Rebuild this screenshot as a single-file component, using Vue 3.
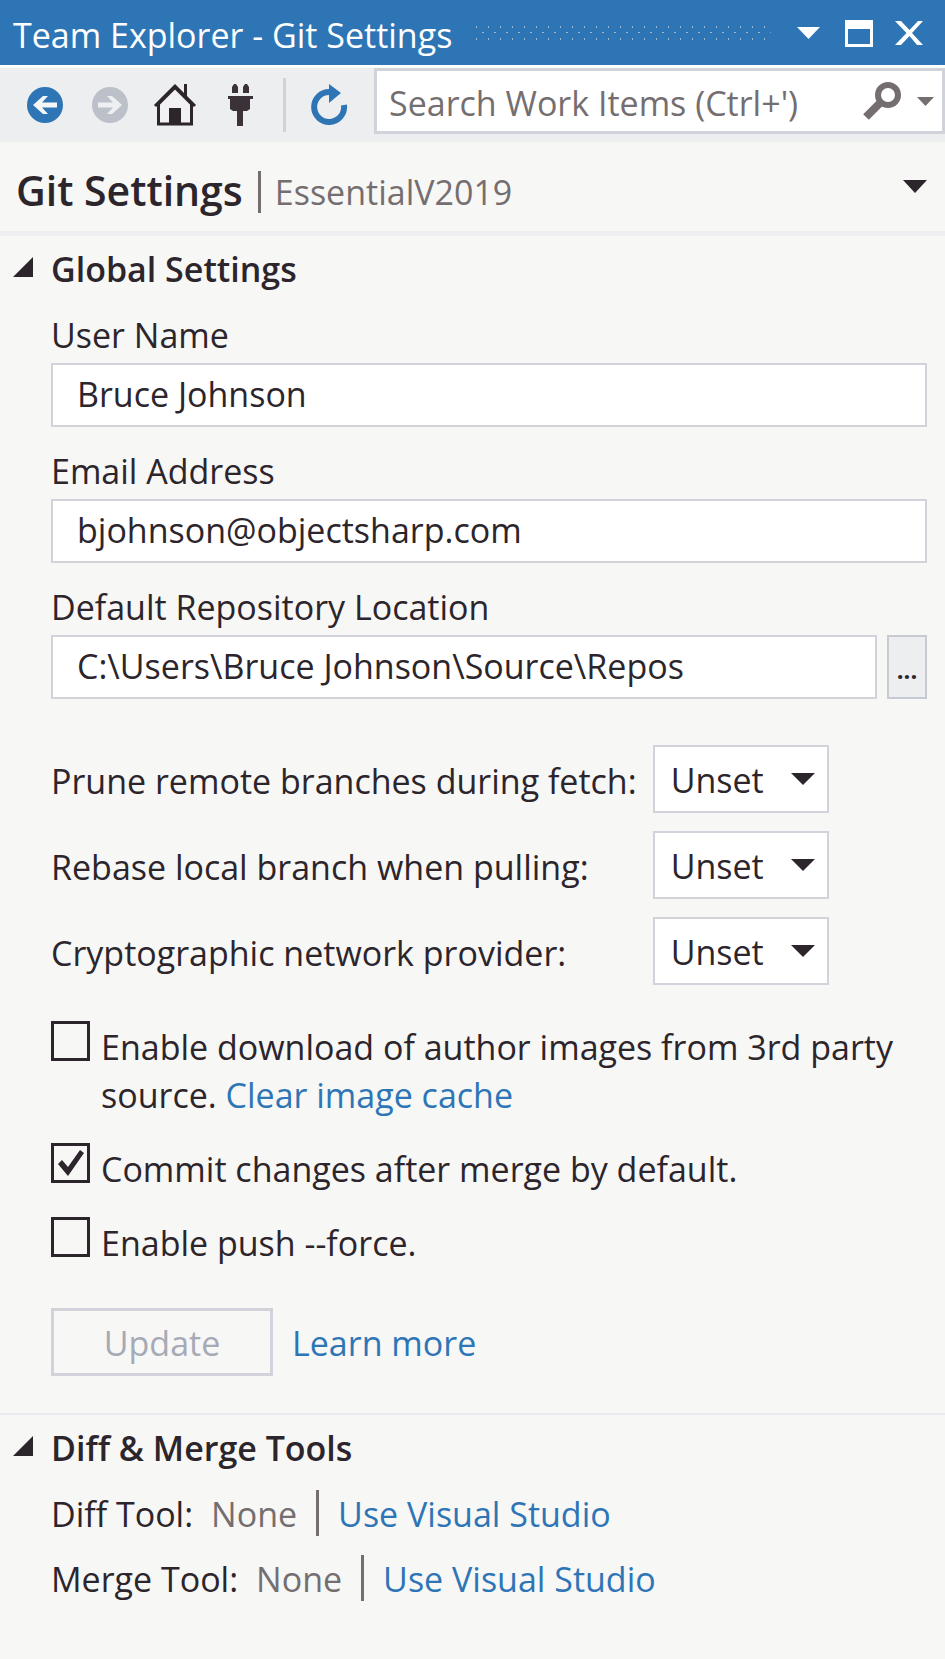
<script setup>
import { reactive, ref } from 'vue'

const search = ref('')

const fields = reactive([
  { id: 'user-name', label: 'User Name', value: 'Bruce Johnson' },
  { id: 'email', label: 'Email Address', value: 'bjohnson@objectsharp.com' },
  { id: 'repo', label: 'Default Repository Location', value: 'C:\\Users\\Bruce Johnson\\Source\\Repos', browse: true }
])

const choices = reactive([
  { id: 'prune', label: 'Prune remote branches during fetch:', value: 'Unset' },
  { id: 'rebase', label: 'Rebase local branch when pulling:', value: 'Unset' },
  { id: 'crypto', label: 'Cryptographic network provider:', value: 'Unset' }
])

const checks = reactive({ images: false, commit: true, force: false })

const tools = [
  { name: 'Diff Tool:', value: 'None' },
  { name: 'Merge Tool:', value: 'None' }
]
</script>

<template>
  <div class="panel">
    <header class="titlebar">
      <span class="title">Team Explorer - Git Settings</span>
      <svg class="grip" height="14" aria-hidden="true">
        <defs>
          <pattern id="grip-dots" width="12" height="12" patternUnits="userSpaceOnUse">
            <rect x="0" y="0" width="1" height="2" />
            <rect x="6" y="6" width="2" height="1" />
          </pattern>
        </defs>
        <rect width="100%" height="14" fill="url(#grip-dots)" />
      </svg>
      <button class="win" type="button" aria-label="Window position">
        <svg width="30" height="30" viewBox="0 0 30 30"><path d="M3 9h23L14.500 21z" fill="#fff" /></svg>
      </button>
      <button class="win" type="button" aria-label="Maximize">
        <svg width="30" height="30" viewBox="0 0 30 30"><path d="M1 2h28v27H1zM4 11v15h22V11z" fill="#fff" fill-rule="evenodd" /></svg>
      </button>
      <button class="win" type="button" aria-label="Close">
        <svg width="30" height="30" viewBox="0 0 30 30"><path d="M1 3h6l8.500 9L24 3h5L18 15l11 12h-6l-7.500-9L7 27H1l11.500-12z" fill="#fff" /></svg>
      </button>
    </header>

    <nav class="toolbar">
      <button class="tool" type="button" aria-label="Back">
        <svg width="44" height="44" viewBox="0 0 44 44">
          <circle cx="22" cy="22" r="18" fill="#2e75b6" />
          <path d="M10 22l10-9h5l-6 6.500h15v5H19l6 6.500h-5z" fill="#f4f6f8" />
        </svg>
      </button>
      <button class="tool" type="button" aria-label="Forward">
        <svg width="44" height="44" viewBox="0 0 44 44">
          <circle cx="22" cy="22" r="18" fill="#bcc0c9" />
          <path d="M34 22l-10-9h-5l6 6.500H10v5h15l-6 6.500h5z" fill="#eeeff1" />
        </svg>
      </button>
      <button class="tool" type="button" aria-label="Home">
        <svg width="44" height="44" viewBox="0 0 44 44">
          <path d="M31 11V1h3v13" fill="#2c252b" />
          <path d="M5.500 21v20h33V21L22 4.500z" fill="#f1f1f3" stroke="#2c252b" stroke-width="3" />
          <path d="M2 23L22 3l20 20" fill="none" stroke="#2c252b" stroke-width="3" />
          <path d="M16 25h12v16H16z" fill="#2c252b" />
        </svg>
      </button>
      <button class="tool" type="button" aria-label="Connect">
        <svg width="44" height="44" viewBox="0 0 44 44">
          <path d="M14 10V4l2-3h2l2 3v6zM25 10V4l2-3h2l2 3v6zM10 13h25v3h-3v10l-3 2h-4v15h-6V28h-4l-3-2V16h-2z" fill="#3a3238" />
        </svg>
      </button>
      <span class="divider"></span>
      <button class="tool" type="button" aria-label="Refresh">
        <svg width="44" height="44" viewBox="0 0 44 44">
          <path d="M23 9A15 15 0 1 0 37 22" fill="none" stroke="#2e75b6" stroke-width="6" />
          <path d="M22 1l12 9-12 10z" fill="#2e75b6" />
        </svg>
      </button>
      <div class="search">
        <input v-model="search" type="text" placeholder="Search Work Items (Ctrl+')" aria-label="Search Work Items" />
        <button type="button" aria-label="Search">
          <svg width="40" height="40" viewBox="0 0 40 40">
            <circle cx="25" cy="14" r="10" fill="none" stroke="#746e70" stroke-width="6" />
            <path d="M18 21L3 36" stroke="#746e70" stroke-width="8" />
          </svg>
        </button>
        <button type="button" aria-label="Search options">
          <svg width="17" height="9" viewBox="0 0 17 9"><path d="M0 0h17L8.500 9z" fill="#746e70" /></svg>
        </button>
      </div>
    </nav>

    <div class="heading">
      <h1>Git Settings</h1>
      <span class="bar"></span>
      <span class="project">EssentialV2019</span>
      <button type="button" aria-label="Select page">
        <svg width="24" height="13" viewBox="0 0 24 13"><path d="M0 0h24L12 13z" fill="#2c252b" /></svg>
      </button>
    </div>

    <section class="section">
      <h2>
        <svg width="20" height="20" viewBox="0 0 20 20" aria-hidden="true"><path d="M20 0v20H0z" fill="#2c252b" /></svg>
        Global Settings
      </h2>
      <div class="body">
        <div class="fields">
          <div v-for="f in fields" :key="f.id" class="field">
            <label :for="f.id">{{ f.label }}</label>
            <div class="row">
              <input :id="f.id" v-model="f.value" type="text" />
              <button v-if="f.browse" class="browse" type="button" aria-label="Browse">...</button>
            </div>
          </div>
        </div>

        <div class="choices">
          <template v-for="c in choices" :key="c.id">
            <label :for="c.id">{{ c.label }}</label>
            <div class="select">
              <select :id="c.id" v-model="c.value">
                <option>Unset</option>
                <option>True</option>
                <option>False</option>
              </select>
              <svg width="24" height="12" viewBox="0 0 24 12" aria-hidden="true"><path d="M0 0h24L12 12z" fill="#2c252b" /></svg>
            </div>
          </template>
        </div>

        <div class="checks">
          <div class="check">
            <input id="images" v-model="checks.images" type="checkbox" />
            <label for="images">
              Enable download of author images from 3rd party source.
              <a href="#">Clear image cache</a>
            </label>
          </div>
          <div class="check">
            <input id="commit" v-model="checks.commit" type="checkbox" />
            <label for="commit">Commit changes after merge by default.</label>
          </div>
          <div class="check">
            <input id="force" v-model="checks.force" type="checkbox" />
            <label for="force">Enable push --force.</label>
          </div>
        </div>

        <div class="actions">
          <button class="update" type="button" disabled>Update</button>
          <a href="#">Learn more</a>
        </div>
      </div>
    </section>

    <section class="section second">
      <h2>
        <svg width="20" height="20" viewBox="0 0 20 20" aria-hidden="true"><path d="M20 0v20H0z" fill="#2c252b" /></svg>
        Diff &amp; Merge Tools
      </h2>
      <div class="body tools">
        <div v-for="t in tools" :key="t.name" class="tool-row">
          <span>{{ t.name }}</span>
          <span class="muted">{{ t.value }}</span>
          <span class="bar"></span>
          <a href="#">Use Visual Studio</a>
        </div>
      </div>
    </section>
  </div>
</template>

<style>
body {
  background: #f7f7f6;
}
</style>

<style scoped>
.panel {
  min-height: 100vh;
  background: #f7f7f6;
  color: #2c252b;
  font: 34px/48px "Open Sans", "Noto Sans", sans-serif;
}
.panel * {
  box-sizing: border-box;
}
button,
input,
select {
  margin: 0;
  padding: 0;
  border: 0;
  border-radius: 0;
  background: none;
  color: inherit;
  font: inherit;
  outline: none;
}
svg {
  display: block;
}
a {
  color: #2e75b6;
  text-decoration: none;
}

.titlebar {
  display: flex;
  align-items: center;
  height: 65px;
  padding: 0 11px 0 13px;
  background: #2e75b6;
  color: #fff;
}
.title {
  padding-top: 4px;
  white-space: nowrap;
}
.grip {
  flex: 1;
  width: 0;
  margin: 0 13px 0 24px;
  fill: #a0b8cf;
}
.win {
  display: flex;
  justify-content: center;
  width: 50px;
}

.toolbar {
  display: flex;
  align-items: center;
  gap: 21px;
  height: 77px;
  padding-left: 23px;
  border-top: 3px solid #fff;
  background: #edeef0;
}
.divider {
  width: 3px;
  height: 54px;
  background: #d0d2da;
}
.search {
  display: flex;
  flex: 1;
  align-items: center;
  align-self: flex-start;
  height: 66px;
  min-width: 0;
  margin-left: 2px;
  padding: 0 8px 0 12px;
  gap: 14px;
  border: 3px solid #d2d3da;
  background: #fff;
}
.search input {
  flex: 1;
  min-width: 0;
  padding-top: 4px;
  color: #746e70;
}
.search input::placeholder {
  color: #746e70;
  opacity: 1;
}

.heading {
  display: flex;
  align-items: center;
  height: 94px;
  padding: 0 18px 0 16px;
  border-bottom: 5px solid #eeeff2;
}
h1 {
  margin: 0;
  padding-top: 6px;
  font-size: 41px;
  font-weight: 600;
}
.bar {
  width: 3px;
  height: 46px;
  background: #746e70;
}
.heading .bar {
  height: 42px;
  margin: 10px 14px 0 15px;
}
.project,
.muted {
  color: #746e70;
}
.project {
  padding-top: 10px;
}
.heading button {
  margin-left: auto;
}

.section {
  padding: 9px 18px 0 13px;
}
.section h2 {
  display: flex;
  align-items: center;
  gap: 18px;
  margin: 0;
  font-size: 34px;
  font-weight: 600;
  line-height: 48px;
}
.section h2 svg {
  margin-bottom: 4px;
}
.body {
  padding-left: 38px;
}
.fields {
  display: grid;
  gap: 22px;
  padding-top: 20px;
}
.field label {
  display: block;
  height: 50px;
  line-height: 44px;
}
.field .row {
  display: flex;
  gap: 10px;
}
.field input {
  flex: 1;
  min-width: 0;
  height: 64px;
  padding: 0 24px 2px;
  border: 2px solid #d2d3da;
  background: #fff;
}
.browse {
  width: 40px;
  padding-top: 6px;
  border: 2px solid #c8cad3;
  background: #edeef0;
  font-size: 24px;
  font-weight: 700;
}

.choices {
  display: grid;
  grid-template-columns: max-content 176px;
  align-items: center;
  gap: 18px 16px;
  margin-top: 46px;
}
.choices label {
  padding-top: 4px;
}
.select {
  position: relative;
}
.select select {
  display: block;
  width: 100%;
  height: 68px;
  padding: 2px 44px 0 16px;
  appearance: none;
  border: 2px solid #d2d3da;
  background: #fff;
}
.select svg {
  position: absolute;
  top: 28px;
  right: 14px;
  pointer-events: none;
}

.checks {
  display: grid;
  gap: 24px;
  margin-top: 36px;
}
.check {
  display: flex;
  gap: 11px;
}
.check label {
  padding-top: 2px;
}
.check input {
  flex: none;
  width: 39px;
  height: 40px;
  appearance: none;
  border: 3px solid #2c252b;
}
.check input:checked::before {
  display: block;
  width: 33px;
  height: 34px;
  background: #2c252b;
  clip-path: polygon(4px 18px, 8px 14px, 14px 21px, 26px 4px, 30px 7px, 14px 30px);
  content: "";
}

.actions {
  display: flex;
  align-items: center;
  gap: 19px;
  margin-top: 41px;
}
.actions a {
  padding-top: 2px;
}
.update {
  width: 222px;
  height: 68px;
  padding-top: 2px;
  border: 3px solid #d2d3da;
  color: #a5aab6;
}

.second {
  margin-top: 37px;
  border-top: 2px solid #eaebef;
}
.tools {
  padding-top: 8px;
}
.tool-row {
  display: flex;
  align-items: center;
  height: 65px;
}
.tool-row span:first-child,
.tool-row .muted,
.tool-row a {
  padding-top: 2px;
}
.tool-row .muted {
  margin-left: 18px;
}
.tool-row .bar {
  margin: 0 19px;
}
</style>
